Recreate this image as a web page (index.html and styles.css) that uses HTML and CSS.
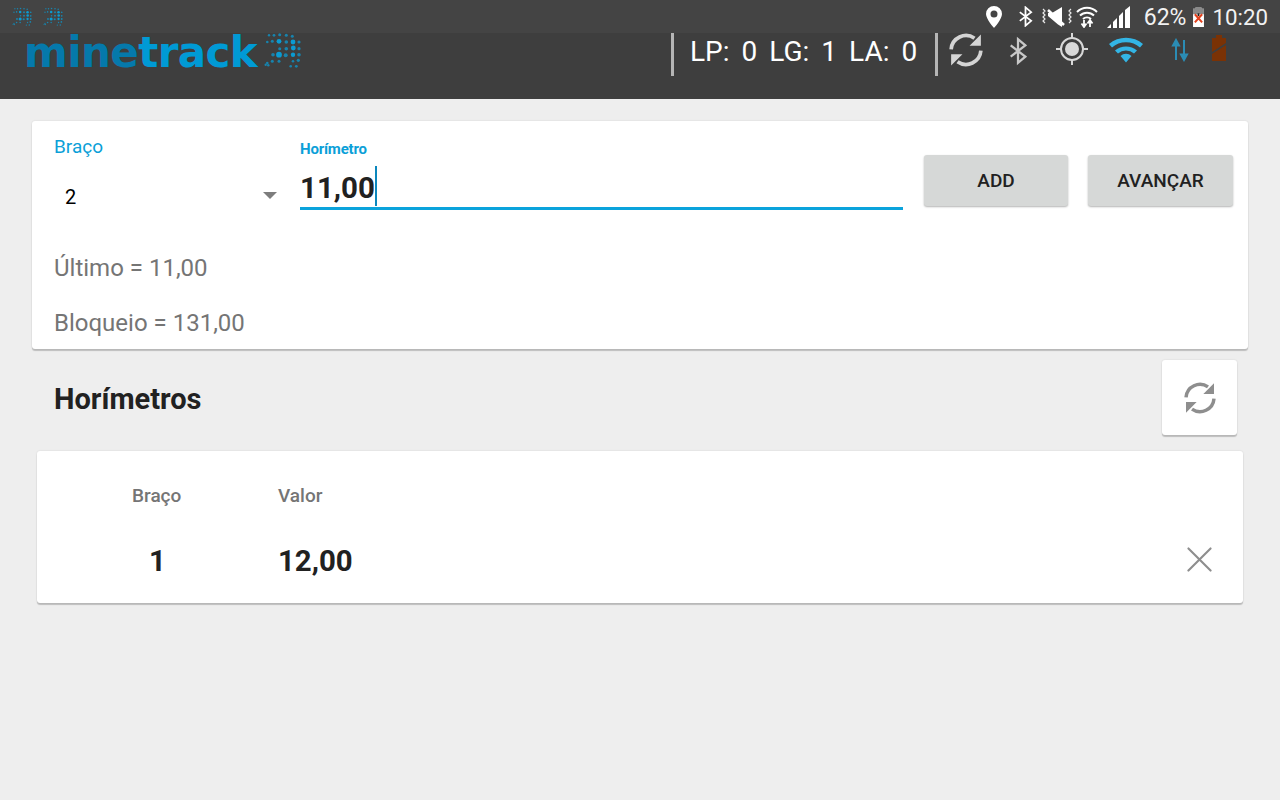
FILE: index.html
```html
<!DOCTYPE html>
<html lang="pt">
<head>
<meta charset="UTF-8" />
<title>Minetrack</title>
<link rel="stylesheet" href="styles.css">
</head>
<body>

<svg class="sprites" width="0" height="0">
  <symbol id="sync" viewBox="0 0 24 24">
    <path d="M1.500 11.500A10.500 10.500 0 0 1 18 3.700" fill="none" stroke="currentColor" stroke-width="2.600"/>
    <path d="M22.500 12.500A10.500 10.500 0 0 1 6 20.300" fill="none" stroke="currentColor" stroke-width="2.600"/>
    <path d="M22.500 1V9H14.500Z M1.500 23V15H9.500Z" fill="currentColor"/>
  </symbol>
  <symbol id="bt" viewBox="4 0 16 24">
    <path d="M5.500 7l13 10-6.500 5.500V1.500L18.500 7l-13 10" fill="none" stroke="currentColor" stroke-width="2"/>
  </symbol>
  <symbol id="globe" viewBox="5 4 37 36">
    <g fill="#0a9bd2">
      <g opacity=".75">
        <circle cx="10" cy="7.300" r="1.200"/><circle cx="15" cy="7.300" r="1.400"/><circle cx="20.700" cy="6.700" r="1.500"/><circle cx="27.300" cy="7.300" r="1.500"/><circle cx="33.300" cy="8.300" r="1.500"/>
        <circle cx="8.300" cy="14" r="1.300"/><circle cx="13.300" cy="13.300" r="1.500"/><circle cx="27.300" cy="14" r="1.800"/><circle cx="40" cy="14" r="1.600"/>
        <circle cx="20.700" cy="20.700" r="1.500"/><circle cx="27.300" cy="20.700" r="1.800"/><circle cx="40" cy="20.700" r="1.600"/>
        <circle cx="14" cy="26.700" r="1.800"/><circle cx="26.700" cy="27.300" r="2"/><circle cx="40" cy="26.700" r="1.800"/>
        <circle cx="8.300" cy="35" r="1.300"/><circle cx="13.300" cy="33.300" r="1.500"/><circle cx="20" cy="33.300" r="1.500"/><circle cx="34" cy="33.300" r="1.300"/><circle cx="39.300" cy="32.300" r="1.600"/>
        <circle cx="6.700" cy="36.700" r="1.200"/><circle cx="9.300" cy="37.300" r="1.200"/><circle cx="31.700" cy="38.300" r="1.300"/><circle cx="37.300" cy="38.300" r="1.400"/>
      </g>
      <circle cx="20" cy="13.300" r="2.400"/><circle cx="34" cy="14" r="2.400"/><circle cx="34.300" cy="20" r="2.400"/><circle cx="20" cy="26.700" r="2.900"/><circle cx="34" cy="26.700" r="2.200"/>
    </g>
  </symbol>
</svg>

<header class="topbar">
  <div class="statusbar">
    <div class="notif">
      <svg class="notif-icon"><use href="#globe"/></svg>
      <svg class="notif-icon"><use href="#globe"/></svg>
    </div>
    <div class="sys">
      <svg class="sys-pin" viewBox="0 0 16 22"><path fill-rule="evenodd" d="M8 0a8 8 0 0 1 8 8C16 13 8 22 8 22S0 13 0 8A8 8 0 0 1 8 0zm0 4.500a3.500 3.500 0 1 0 0 7 3.500 3.500 0 0 0 0-7z" fill="#fff"/></svg>
      <svg class="sys-bt"><use href="#bt"/></svg>
      <svg class="sys-mute" viewBox="0 0 32 20">
        <path d="M2 2l2 2-2 2 2 2-2 2 2 2-2 2 2 2M30 2l-2 2 2 2-2 2 2 2-2 2 2 2-2 2" fill="none" stroke="#e8e8e8" stroke-width="1.200"/>
        <path d="M7 6h4l10-6v20l-4-2.500L7 9z" fill="#fff"/>
        <path d="M7 3l16 15" stroke="#fff" stroke-width="2.500"/>
      </svg>
      <svg class="sys-wifi" viewBox="0 0 22 23">
        <path d="M1 7a14 14 0 0 1 20 0M4 10.500a10 10 0 0 1 14 0M7 14a6 6 0 0 1 8 0" fill="none" stroke="#fff" stroke-width="2"/>
        <path d="M8 15v6m-2.500-2.500L8 22l2.500-3.500M14 22v-6m-2.500 2.500L14 15l2.500 3.500" fill="none" stroke="#fff" stroke-width="1.800"/>
      </svg>
      <svg class="sys-signal" viewBox="0 0 24 22"><path d="M0 22h4v-4l-4 4zM6 22h4V12l-4 4zM12 22h4V6l-4 4zM18 22h5V0l-5 4z" fill="#fff"/></svg>
      <span class="sys-pct">62%</span>
      <svg class="sys-batt" viewBox="1 0 12 22">
        <path d="M4 0h6v2h3v20H1V2h3z" fill="#fff"/>
        <path d="M4 0h6v2h3v6H1V2h3z" fill="#8a8a8a"/>
        <path d="M6 7h2v3H6z" fill="#222"/>
        <path d="M3 8l8 9M11 8l-8 9" stroke="#e2401c" stroke-width="2.200"/>
      </svg>
      <span class="sys-time">10:20</span>
    </div>
  </div>
  <div class="appbar">
    <div class="brand">
      <span class="logo-text"><span class="logo-dark">mine</span>track</span>
      <svg class="logo-globe"><use href="#globe"/></svg>
    </div>
    <div class="counters">
      <span>LP:</span><span>0</span><span>LG:</span><span>1</span><span>LA:</span><span>0</span>
    </div>
    <div class="app-icons">
      <svg class="app-sync"><use href="#sync"/></svg>
      <svg class="app-bt"><use href="#bt"/></svg>
      <svg class="app-gps" viewBox="0 0 32 32">
        <circle cx="16" cy="16" r="11" fill="none" stroke="#d8d8d8" stroke-width="2"/>
        <circle cx="16" cy="16" r="7" fill="#d8d8d8"/>
        <path d="M16 0v5M16 27v5M0 16h5M27 16h5" stroke="#d8d8d8" stroke-width="2"/>
      </svg>
      <svg class="app-wifi" viewBox="0 0 34 26">
        <path d="M0 7a26 26 0 0 1 34 0l-3 3.500a21 21 0 0 0-28 0z M6 13.500a17 17 0 0 1 22 0l-3 3a12 12 0 0 0-16 0z M11.500 19a8 8 0 0 1 11 0l-5.500 6.500z" fill="#33b5e5"/>
      </svg>
      <svg class="app-arrows" viewBox="0 0 20 24">
        <path d="M6 22V5M3 7.500L6 2l3 5.500zM14 2v17M11 16.500l3 5.500 3-5.500z" stroke="#2b8cb4" stroke-width="2" fill="#2b8cb4"/>
      </svg>
      <svg class="app-batt" viewBox="0 0 14 26">
        <path d="M4 0h6v3h4v23H0V3h4z" fill="#7a3205"/>
        <path d="M0 17L14 8v2L0 19z" fill="#3e3e3e"/>
      </svg>
    </div>
  </div>
</header>

<main class="content">
  <section class="card form-card">
    <div class="form-row">
      <div class="field-select">
        <label class="lbl-select">Braço</label>
        <div class="select-box"><span>2</span><i class="caret"></i></div>
      </div>
      <div class="field-input">
        <label class="lbl-input">Horímetro</label>
        <div class="input-box"><span>11,00</span><i class="cursor"></i></div>
      </div>
      <div class="actions">
        <button class="btn">ADD</button>
        <button class="btn">AVANÇAR</button>
      </div>
    </div>
    <p class="info first">Último = 11,00</p>
    <p class="info">Bloqueio = 131,00</p>
  </section>

  <div class="section-head">
    <h2>Horímetros</h2>
    <button class="refresh"><svg><use href="#sync"/></svg></button>
  </div>

  <section class="card list-card">
    <div class="list-row list-head">
      <span class="col-arm">Braço</span>
      <span class="col-val">Valor</span>
    </div>
    <div class="list-row list-item">
      <span class="col-arm">1</span>
      <span class="col-val">12,00</span>
      <svg class="remove" viewBox="0 0 26 26"><path d="M1.500 1.500l23 23M24.500 1.500l-23 23" stroke="#8e8e8e" stroke-width="2.200" stroke-linecap="round"/></svg>
    </div>
  </section>
</main>

</body>
</html>
```

FILE: styles.css
```css
* {
  box-sizing: border-box;
}
html, body {
  height: 100%;
}
body {
  margin: 0;
  height: 800px;
  overflow: hidden;
  font-family: Roboto, "Liberation Sans", sans-serif;
  background: #eeeeee;
  color: #212121;
}
.sprites {
  position: absolute;
}
svg {
  display: block;
}

.topbar {
  height: 99px;
  background: #3e3e3e;
}
.statusbar {
  height: 33px;
  background: #444444;
  display: flex;
  justify-content: space-between;
  align-items: center;
  padding: 0 12px;
}
.notif {
  display: flex;
  gap: 11px;
}
.notif-icon {
  width: 20px;
  height: 19px;
}
.sys {
  display: flex;
  align-items: center;
  color: #fff;
}
.sys-pin {
  width: 16px;
  height: 22px;
  margin-right: 16px;
}
.sys-bt {
  width: 15px;
  height: 21px;
  margin-right: 8px;
  color: #fff;
}
.sys-mute {
  width: 32px;
  height: 20px;
  margin-right: 3px;
}
.sys-wifi {
  width: 22px;
  height: 23px;
  margin-right: 9px;
}
.sys-signal {
  width: 24px;
  height: 22px;
  margin-right: 13px;
}
.sys-pct {
  font-size: 23px;
  padding-top: 1px;
  color: #f2f2f2;
}
.sys-time {
  font-size: 22.300px;
  padding-top: 1px;
  color: #f2f2f2;
}
.sys-batt {
  width: 13px;
  height: 20px;
  margin: 1px 7px 0 6px;
}

.appbar {
  height: 66px;
  display: flex;
  align-items: flex-start;
}
.brand {
  display: flex;
  align-items: flex-start;
  margin-left: 24px;
  width: 647px;
}
.logo-text {
  font-family: "DejaVu Sans", sans-serif;
  font-weight: 700;
  font-size: 42px;
  line-height: 34px;
  letter-spacing: -0.600px;
  margin-top: 3px;
  color: #009ad5;
}
.logo-dark {
  color: #0579ab;
}
.logo-globe {
  width: 37px;
  height: 36px;
  margin: -1px 0 0 7px;
}
.counters {
  height: 43px;
  border-left: 3px solid #b5b5b5;
  border-right: 3px solid #b5b5b5;
  display: flex;
  align-items: center;
  gap: 12px;
  padding: 0 18px 6px 16px;
  font-size: 28px;
  color: #fff;
}
.app-icons {
  display: flex;
  align-items: flex-start;
  color: #d4d4d4;
}
.app-sync {
  width: 34px;
  height: 34px;
  margin: 0 0 0 11px;
}
.app-bt {
  width: 18px;
  height: 30px;
  margin: 3px 0 0 26px;
  color: #c8c8c8;
}
.app-gps {
  width: 32px;
  height: 32px;
  margin: 0 0 0 29px;
}
.app-wifi {
  width: 34px;
  height: 26px;
  margin: 4px 0 0 21px;
}
.app-arrows {
  width: 20px;
  height: 24px;
  margin: 5px 0 0 27px;
}
.app-batt {
  width: 14px;
  height: 26px;
  margin: 2px 0 0 22px;
}

.content {
  padding: 22px 32px 0;
}
.card {
  background: #fff;
  border-radius: 3px;
  box-shadow: 0 2px 1px rgba(0,0,0,0.2), 0 0 2px rgba(0,0,0,0.12);
}
.form-card {
  height: 228px;
  padding: 16px 15px 0 22px;
}
.form-row {
  display: flex;
  height: 93px;
}
.field-select {
  width: 246px;
}
.lbl-select {
  display: block;
  font-size: 19px;
  line-height: 20px;
  color: #0b9fd8;
}
.select-box {
  display: flex;
  justify-content: space-between;
  align-items: center;
  height: 36px;
  margin-top: 22px;
  padding: 0 23px 0 11px;
  font-size: 20px;
  color: #000;
}
.caret {
  width: 0;
  height: 0;
  margin-top: -4px;
  border-left: 7px solid transparent;
  border-right: 7px solid transparent;
  border-top: 7px solid #7d7d7d;
}
.field-input {
  width: 603px;
  margin-right: 21px;
}
.lbl-input {
  display: block;
  font-size: 15px;
  font-weight: 700;
  line-height: 24px;
  letter-spacing: -0.200px;
  color: #0b9fd8;
}
.input-box {
  display: flex;
  align-items: center;
  height: 49px;
  padding-top: 7px;
  border-bottom: 3px solid #0ba3dc;
  font-size: 29.500px;
  font-weight: 700;
  color: #212121;
}
.cursor {
  width: 2px;
  height: 40px;
  margin-top: -4px;
  background: #0b87bd;
}
.actions {
  display: flex;
  gap: 20px;
  align-items: flex-start;
  padding-top: 18px;
}
.btn {
  width: 144px;
  height: 51px;
  border: none;
  border-radius: 3px;
  background: #d6d8d7;
  box-shadow: 0 1px 2px rgba(0,0,0,0.3);
  font-family: inherit;
  font-size: 19px;
  font-weight: 500;
  color: #212121;
}
.btn:last-child {
  width: 145px;
}
.info {
  margin: 0;
  font-size: 24px;
  line-height: 28px;
  color: #757575;
}
.info.first {
  margin-top: 24px;
  margin-bottom: 27px;
}

.section-head {
  display: flex;
  justify-content: space-between;
  align-items: center;
  height: 75px;
  margin-top: 11px;
  padding: 0 11px 0 22px;
}
.section-head h2 {
  margin: 3px 0 0;
  font-size: 29px;
  font-weight: 700;
  color: #212121;
}
.refresh {
  width: 75px;
  height: 75px;
  padding: 0;
  border: none;
  border-radius: 3px;
  background: #fff;
  box-shadow: 0 2px 1px rgba(0,0,0,0.2), 0 0 2px rgba(0,0,0,0.12);
  display: flex;
  align-items: center;
  justify-content: center;
  color: #8e8e8e;
}
.refresh svg {
  width: 32px;
  height: 32px;
}

.list-card {
  height: 152px;
  margin: 16px 5px 0;
  padding: 0 20px 0 0;
}
.list-row {
  display: flex;
  align-items: center;
}
.list-head {
  height: 88px;
  font-size: 19px;
  font-weight: 500;
  color: #757575;
}
.list-item {
  height: 44px;
  font-size: 29.400px;
  font-weight: 700;
  color: #212121;
}
.col-arm {
  width: 241px;
  padding-left: 95px;
}
.list-item .col-arm {
  padding-left: 112px;
}
.remove {
  width: 25px;
  height: 25px;
  margin: -3px 11px 0 auto;
}
```
